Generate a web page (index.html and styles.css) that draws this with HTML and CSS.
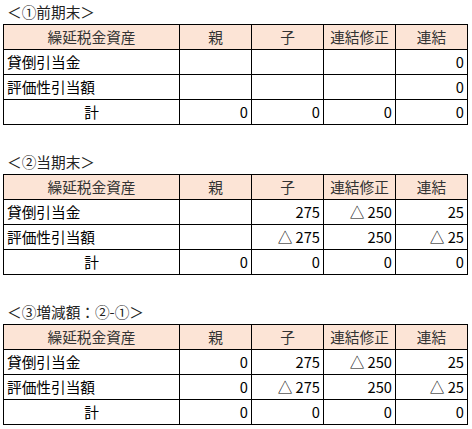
FILE: index.html
```html
<!DOCTYPE html>
<html lang="ja">
<head>
<meta charset="utf-8">
<link rel="stylesheet" href="styles.css">
</head>
<body>
<section class="block">
  <div class="title">＜①前期末＞</div>
  <div class="sheet">
    <div class="hd">繰延税金資産</div><div class="hd">親</div><div class="hd">子</div><div class="hd">連結修正</div><div class="hd">連結</div>
    <div class="lbl">貸倒引当金</div><div class="num"></div><div class="num"></div><div class="num"></div><div class="num">0</div>
    <div class="lbl">評価性引当額</div><div class="num"></div><div class="num"></div><div class="num"></div><div class="num">0</div>
    <div class="lbl tot">計</div><div class="num">0</div><div class="num">0</div><div class="num">0</div><div class="num">0</div>
  </div>
</section>
<section class="block">
  <div class="title">＜②当期末＞</div>
  <div class="sheet">
    <div class="hd">繰延税金資産</div><div class="hd">親</div><div class="hd">子</div><div class="hd">連結修正</div><div class="hd">連結</div>
    <div class="lbl">貸倒引当金</div><div class="num"></div><div class="num">275</div><div class="num">△ 250</div><div class="num">25</div>
    <div class="lbl">評価性引当額</div><div class="num"></div><div class="num">△ 275</div><div class="num">250</div><div class="num">△ 25</div>
    <div class="lbl tot">計</div><div class="num">0</div><div class="num">0</div><div class="num">0</div><div class="num">0</div>
  </div>
</section>
<section class="block">
  <div class="title">＜③増減額：②-①＞</div>
  <div class="sheet">
    <div class="hd">繰延税金資産</div><div class="hd">親</div><div class="hd">子</div><div class="hd">連結修正</div><div class="hd">連結</div>
    <div class="lbl">貸倒引当金</div><div class="num">0</div><div class="num">275</div><div class="num">△ 250</div><div class="num">25</div>
    <div class="lbl">評価性引当額</div><div class="num">0</div><div class="num">△ 275</div><div class="num">250</div><div class="num">△ 25</div>
    <div class="lbl tot">計</div><div class="num">0</div><div class="num">0</div><div class="num">0</div><div class="num">0</div>
  </div>
</section>
</body>
</html>
```
FILE: styles.css
```css
html, body {
  margin: 0;
  padding: 0;
  background: #fff;
}
body {
  font-family: "Noto Sans CJK JP", "Noto Sans", sans-serif;
  font-size: 14.67px;
  color: #000;
  width: 472px;
}
.block + .block {
  margin-top: 25px;
}
.title {
  height: 24px;
  line-height: 24px;
  padding-left: 7px;
  color: #222;
}
.sheet {
  margin-left: 3px;
  width: 465px;
  display: grid;
  grid-template-columns: 175px 71px 71px 71px 71px;
  grid-auto-rows: 24px;
  gap: 1px;
  padding: 1px;
  box-sizing: border-box;
  background: #000;
}
.sheet > div {
  background: #fff;
  line-height: 24px;
  white-space: pre;
  overflow: hidden;
}
.hd {
  background: #fce4d6 !important;
  color: #333;
  text-align: center;
}
.lbl {
  padding-left: 3px;
}
.tot {
  text-align: center;
  padding-left: 0;
}
.num {
  text-align: right;
  padding-right: 3px;
}
```
